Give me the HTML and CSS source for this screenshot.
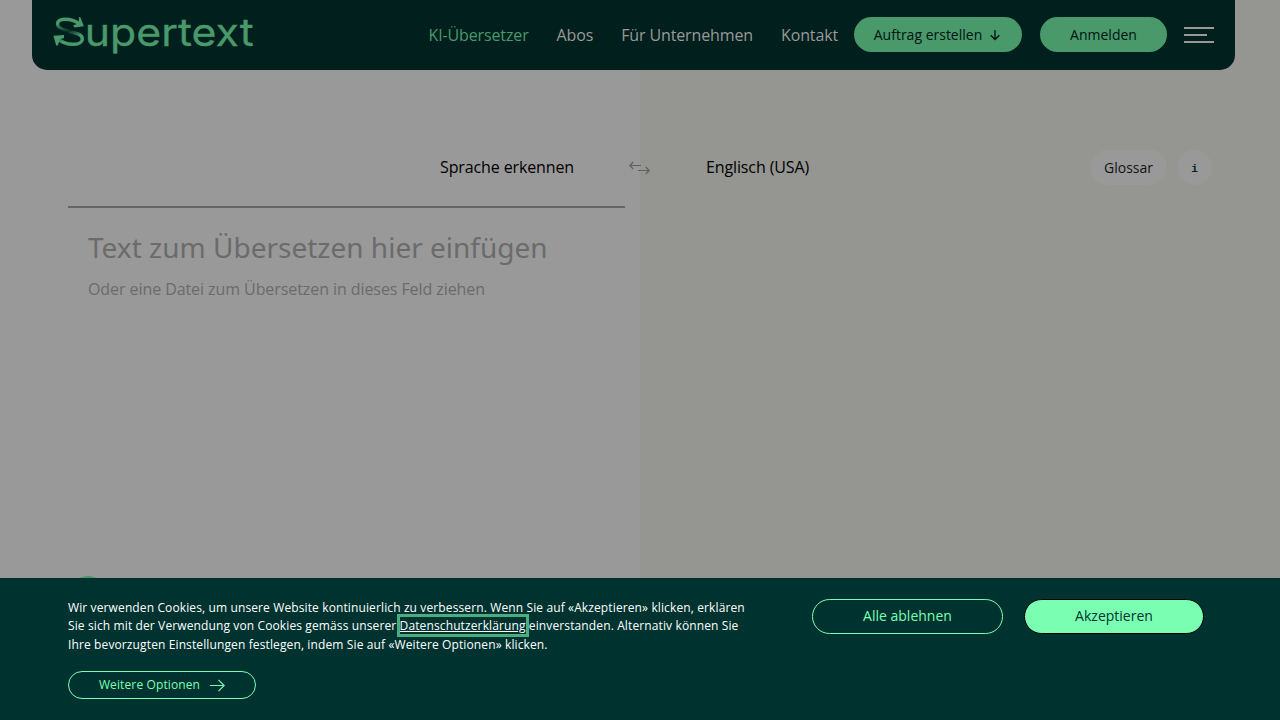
FILE: index.html
```html
<!DOCTYPE html>
<html lang="de">
<head>
<meta charset="utf-8">
<title>Supertext KI-Übersetzer</title>
<link rel="stylesheet" href="styles.css">
</head>
<body>
<div class="page">
  <header class="header">
    <svg class="logo" width="206" height="46" viewBox="50 12 206 46">
      <defs>
        <linearGradient id="top" x1="0" y1="0" x2="0" y2="1">
          <stop offset="0.4" stop-color="#49996b"/><stop offset="1" stop-color="#49996b" stop-opacity="0.15"/>
        </linearGradient>
        <linearGradient id="bottom" x1="0" y1="0" x2="0.7" y2="1">
          <stop offset="0.2" stop-color="#49996b" stop-opacity="0.15"/><stop offset="0.65" stop-color="#49996b"/>
        </linearGradient>
      </defs>
      <path d="M79 23.8C75 20.5 70 19.2 65 19.2C60 19.2 57.5 21 57.5 24C57.5 28 62 29.8 69 31.3" fill="none" stroke="url(#top)" stroke-width="3.4"/>
      <path d="M69 31.3C78 33 82.3 34.8 82.3 38.7C82.3 42.5 78 44.3 73 44.3C66 44.3 61 42 57 38" fill="none" stroke="url(#bottom)" stroke-width="3.4"/>
      <path d="M79 17L80.5 17.5L83.8 26.3L74.3 27.6L73.3 25.3L78.6 23.5Z" fill="#49996b"/>
      <path d="M53.4 35.7L64 35.1V38L60 39.2L57.8 45.5H56.2Z" fill="#49996b"/>
      <text class="logo-text" x="84.7" y="45.5" textLength="169" lengthAdjust="spacingAndGlyphs">upertext</text>
    </svg>
    <nav class="nav">
      <a class="active">KI-Übersetzer</a><a>Abos</a><a>Für Unternehmen</a><a>Kontakt</a>
    </nav>
    <button class="pill order">Auftrag erstellen
      <svg width="10" height="12" viewBox="0 0 10 12"><path d="M5 1V10.5M.7 6.2L5 10.5L9.3 6.2" fill="none" stroke="#001412" stroke-width="1.3"/></svg>
    </button>
    <button class="pill login">Anmelden</button>
    <div class="burger"><i></i><i></i><i></i></div>
  </header>
  <main class="translator">
    <section class="source">
      <div class="source-language">Sprache erkennen</div>
      <div class="input">
        <div class="title">Text zum Übersetzen hier einfügen</div>
        <div class="hint">Oder eine Datei zum Übersetzen in dieses Feld ziehen</div>
      </div>
      <div class="upload"></div>
    </section>
    <section class="target">
      <div class="target-language">Englisch (USA)</div>
      <button class="tool glossary">Glossar</button>
      <button class="tool info">i</button>
    </section>
    <svg class="swap" width="22" height="14" viewBox="0 0 22 14"><path d="M12 4.5H1M4.2 1L.8 4.5L4.2 8M9 9.5H20M16.8 6L20.2 9.5L16.8 13" fill="none" stroke="#5d5f5e" stroke-width="1.1"/></svg>
  </main>
  <aside class="cookies">
    <div class="message">
      <p>Wir verwenden Cookies, um unsere Website kontinuierlich zu verbessern. Wenn Sie auf «Akzeptieren» klicken, erklären<br>Sie sich mit der Verwendung von Cookies gemäss unserer <a class="privacy">Datenschutzerklärung</a> einverstanden. Alternativ können Sie<br>Ihre bevorzugten Einstellungen festlegen, indem Sie auf «Weitere Optionen» klicken.</p>
      <button class="choice options">Weitere Optionen
        <svg width="15" height="14" viewBox="0 0 15 14"><path d="M0 7.5H14M8.5 1.8L14.2 7.5L8.5 13.2" fill="none" stroke="#7affb2" stroke-width="1.1"/></svg>
      </button>
    </div>
    <button class="choice decline">Alle ablehnen</button>
    <button class="choice accept">Akzeptieren</button>
  </aside>
</div>
</body>
</html>
```
FILE: styles.css
```css
* { box-sizing: border-box; }
body { margin: 0; font-family: "Open Sans", sans-serif; color: #000; overflow: hidden; }
button { font-family: inherit; border: 0; padding: 0; white-space: nowrap; display: flex; align-items: center; justify-content: center; }
.page { height: 720px; display: flex; flex-direction: column; background: linear-gradient(90deg, #999 640px, #959592 640px); }
.header { width: 1203px; height: 70px; flex: none; margin-left: 32px; padding: 0 21px 0 18px; background: #001f1d; border-radius: 0 0 15px 15px; display: flex; align-items: center; }
.logo { flex: none; overflow: visible; }
.logo-text { font-family: Inter, sans-serif; font-size: 38.5px; fill: #49996b; stroke: #49996b; stroke-width: .3px; }
.nav { display: flex; gap: 28px; margin-left: auto; font-size: 16px; letter-spacing: -.13px; line-height: 24px; color: #999; white-space: nowrap; }
.active { color: #49996b; }
.pill { height: 35px; margin-bottom: 1px; border-radius: 18px; background: #49996b; color: #001412; font-size: 14px; }
.order { width: 168px; padding-right: 2px; gap: 8px; margin-left: 16px; }
.login { width: 127px; margin-left: 18px; }
.burger { width: 30px; margin-left: 17px; display: flex; flex-direction: column; gap: 5px; }
.burger i { height: 2px; background: #999; }
.burger i:nth-child(2) { width: 23px; }
.translator { position: relative; height: 508px; flex: none; overflow: hidden; display: flex; }
.source { width: 640px; padding: 85px 15px 0 68px; display: flex; flex-direction: column; }
.source-language { padding-left: 372px; font-size: 16px; letter-spacing: -.12px; line-height: 24px; }
.input { margin-top: 27px; padding: 19px 20px 0; border-top: 2px solid #666; color: #6b6b6b; white-space: nowrap; }
.title { font-family: "Noto Sans", sans-serif; font-size: 28px; line-height: 40px; }
.hint { margin-top: 10px; font-size: 16px; letter-spacing: -.075px; line-height: 24px; }
.upload { width: 40px; height: 40px; flex: none; border-radius: 50%; background: #49996b; margin-top: 275px; }
.target { width: 640px; padding: 80px 68px 0 66px; display: flex; align-items: flex-start; }
.target-language { margin: 5px auto 0 0; font-size: 16px; letter-spacing: -.12px; line-height: 24px; }
.tool { height: 35px; border-radius: 18px; background: #999; color: #141414; font-size: 14px; }
.glossary { width: 77px; margin-right: 10px; }
.info { width: 35px; padding-top: 2px; font: 700 11px "Liberation Mono", monospace; color: #002420; }
.swap { position: absolute; left: 629px; top: 91px; }
.cookies { position: relative; height: 142px; flex: none; padding: 21px 76px 0 68px; background: #003330; display: flex; align-items: flex-start; color: #fff; }
.message { margin-right: auto; }
.message p { margin: 0 0 16.8px; font-size: 12px; letter-spacing: .12px; line-height: 18.4px; white-space: nowrap; }
.privacy { text-decoration: underline; outline: 3px solid #49ad80; }
.choice { height: 35px; padding-bottom: 2px; border: 1px solid #7affb2; border-radius: 18px; background: transparent; color: #7affb2; font-size: 14px; }
.options { width: 188px; height: 28px; padding-bottom: 1px; font-size: 12px; letter-spacing: .12px; gap: 10px; }
.decline { width: 191px; }
.accept { width: 180px; margin-left: 21px; background: #7affb2; border-color: #000; color: #003330; }
```
